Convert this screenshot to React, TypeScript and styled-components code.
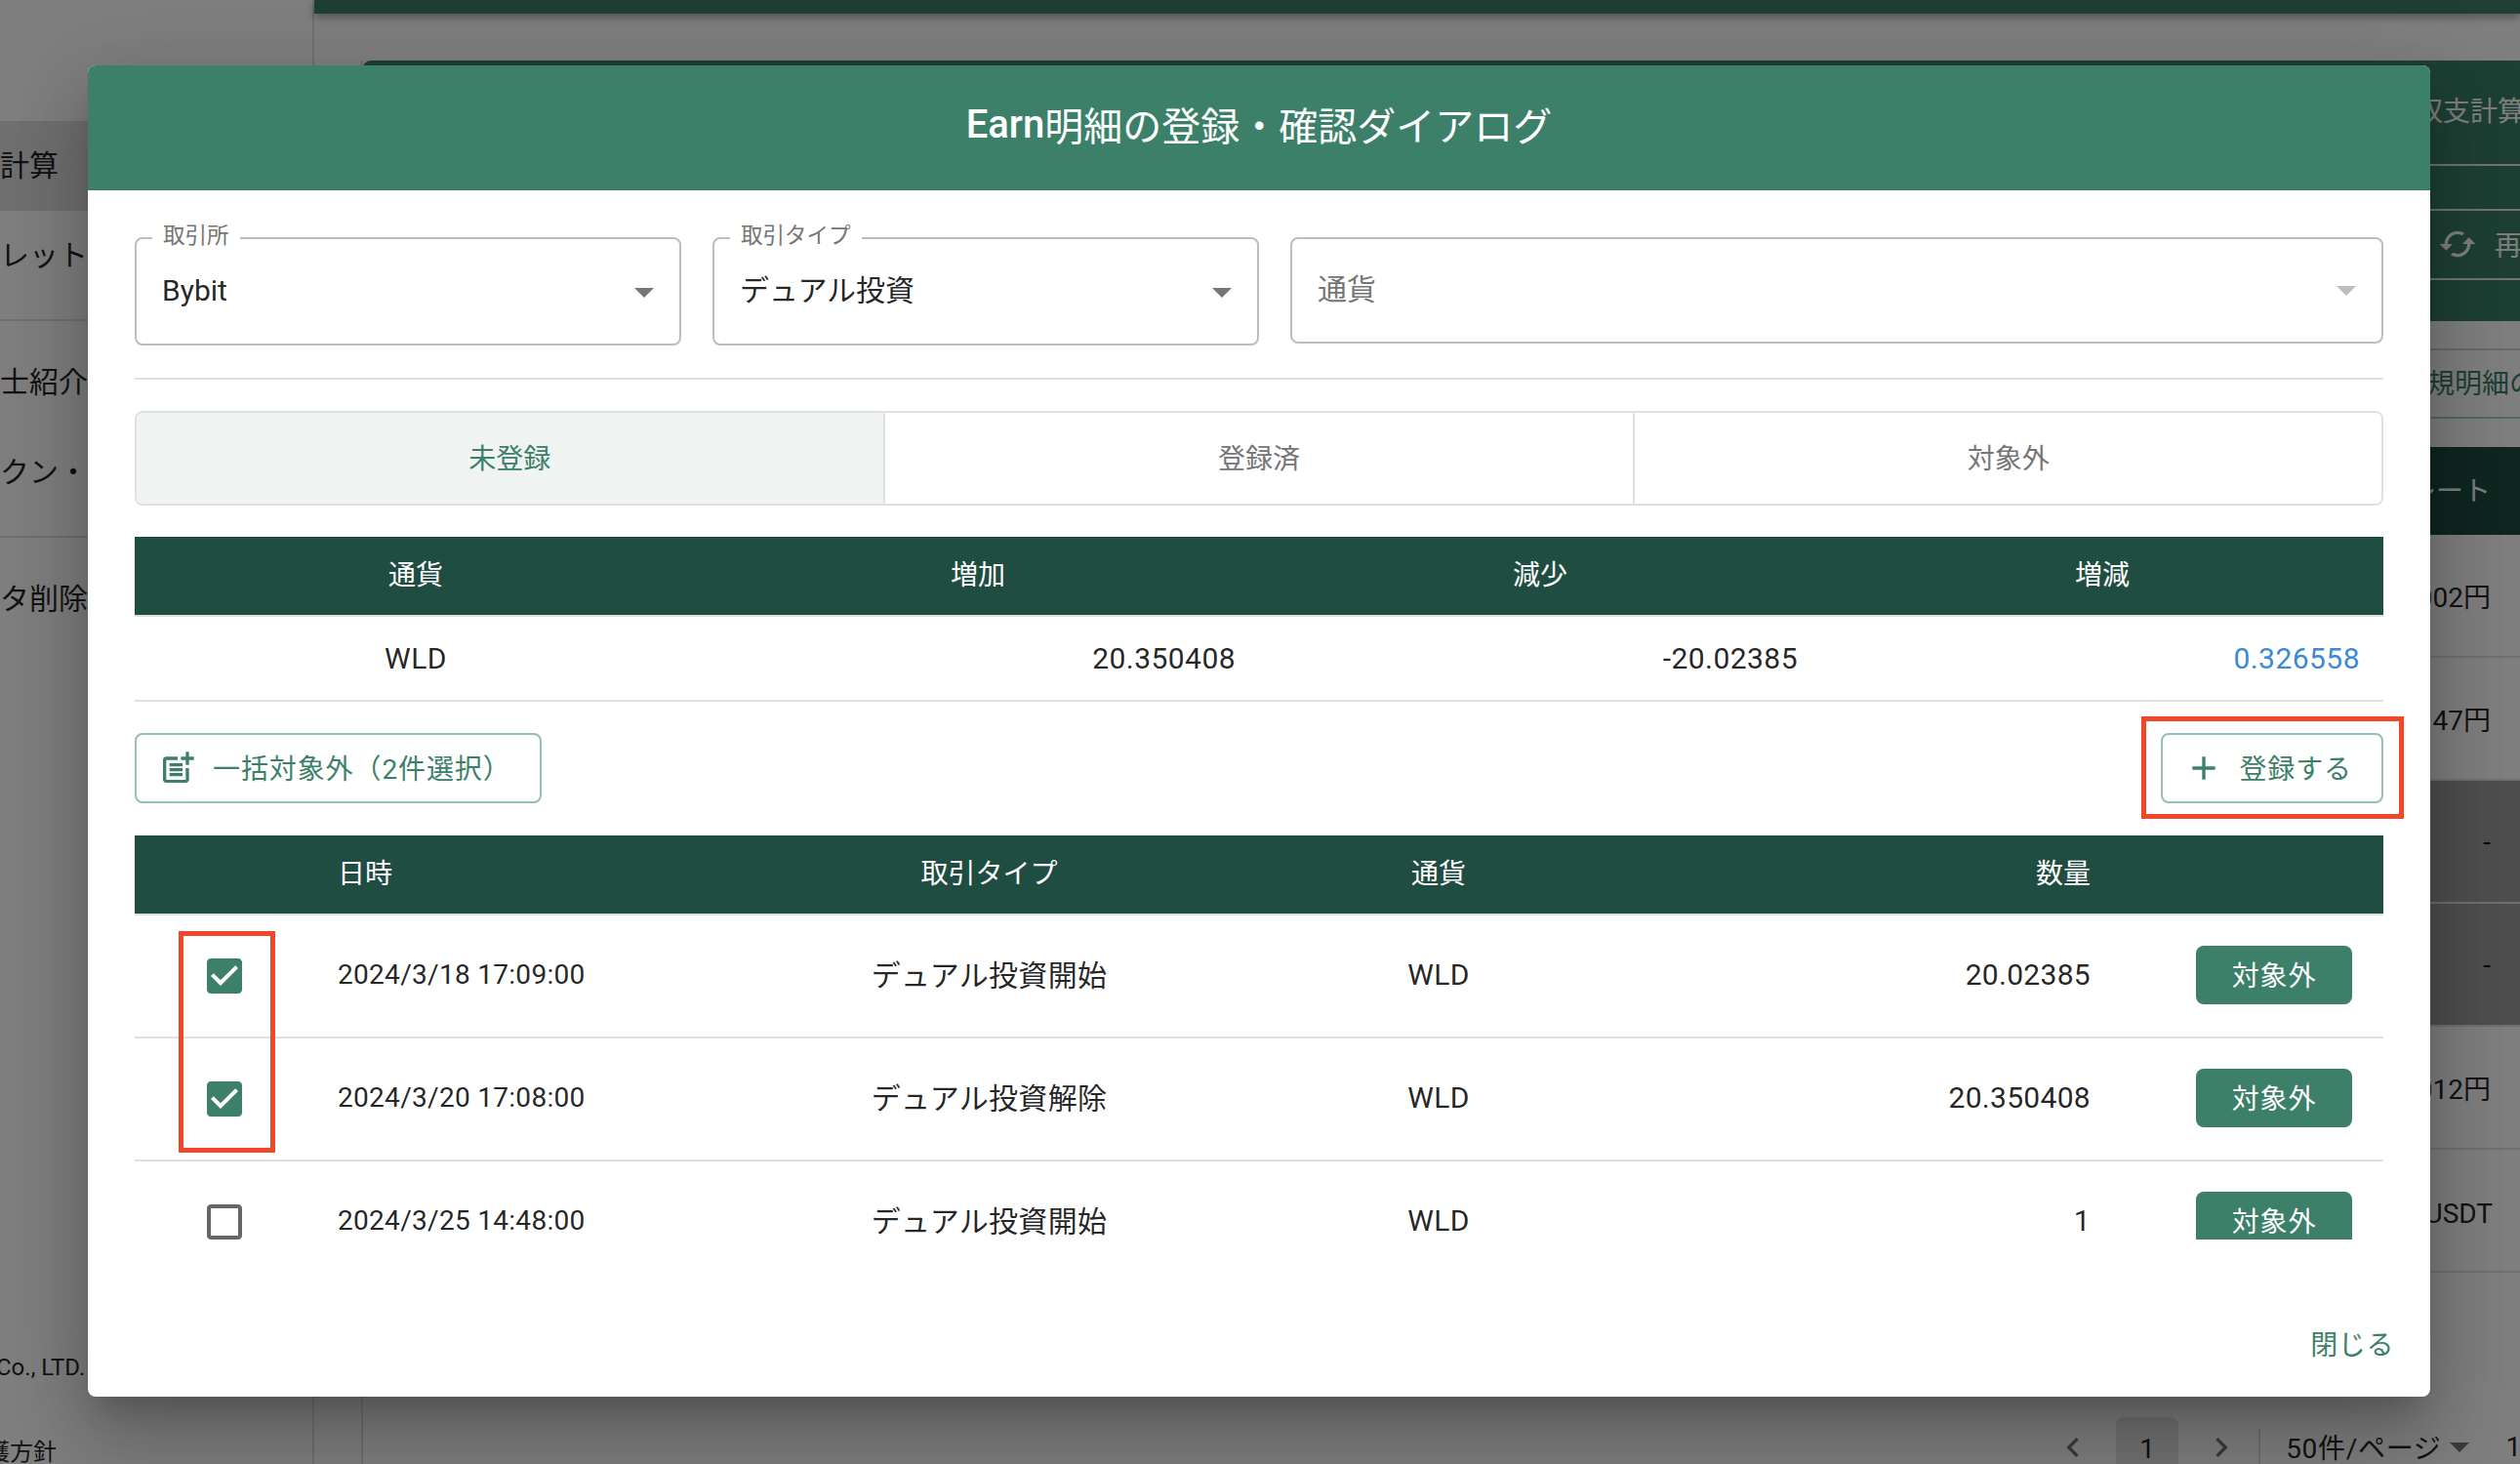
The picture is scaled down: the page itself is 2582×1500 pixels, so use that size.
import React from 'react';
import styled, { createGlobalStyle } from 'styled-components';

const GlobalStyle = createGlobalStyle`
    html, body {
        margin: 0;
        padding: 0;
        background: #fff;
    }
    * {
        box-sizing: border-box;
    }
    body {
        font-family: Roboto, "Noto Sans CJK JP", sans-serif;
        color: rgba(0, 0, 0, 0.87);
        -webkit-font-smoothing: antialiased;
    }
`;

const PRIMARY = '#3d8069';
const TABLE_HEAD = '#1f4d42';
const LINE = '#e0e0e0';

const Page = styled.div`
    width: 2582px;
    height: 1500px;
    display: flex;
    overflow: hidden;
    position: relative;
    background: #fff;
`;

const Sidebar = styled.aside`
    width: 322px;
    flex: none;
    display: flex;
    flex-direction: column;
    padding-top: 124px;
    border-right: 2px solid ${LINE};
`;

const MenuItem = styled.div<{ $selected?: boolean }>`
    height: 92px;
    display: flex;
    align-items: center;
    padding-bottom: 6px;
    font-size: 30px;
    background: ${props => (props.$selected ? 'rgba(0, 0, 0, 0.12)' : 'transparent')};
`;

const MenuDivider = styled.div`
    height: 2px;
    margin: 19px 0 17px;
    background: ${LINE};
`;

const SidebarFooter = styled.div`
    margin-top: auto;
    display: flex;
    flex-direction: column;
    gap: 57px;
    margin-bottom: -3px;
    font-size: 24px;
    line-height: 30px;
`;

const FooterLine = styled.div<{ $shift: number }>`
    margin-left: ${props => props.$shift}px;
    white-space: nowrap;
`;

const Main = styled.main`
    flex: 1;
    min-width: 0;
    display: flex;
    flex-direction: column;
`;

const TopBand = styled.div`
    height: 14px;
    flex: none;
    background: ${PRIMARY};
    box-shadow: 0 4px 10px rgba(0, 0, 0, 0.35);
`;

const Content = styled.div`
    flex: 1;
    display: flex;
    flex-direction: column;
    margin: 48px 0 0 48px;
    border-left: 2px solid ${LINE};
`;

const Panel = styled.section`
    background: ${PRIMARY};
    border-top-left-radius: 8px;
    color: #fff;
`;

const PanelRow = styled.div<{ $height: number; $line?: boolean; $lift?: number }>`
    height: ${props => props.$height}px;
    display: flex;
    align-items: center;
    justify-content: flex-end;
    gap: 18px;
    padding-bottom: ${props => props.$lift || 0}px;
    font-size: 28px;
    white-space: nowrap;
    border-top: ${props => (props.$line ? '2px solid #e8e8e8' : 'none')};
`;

const RowText = styled.span<{ $right: number; $down?: number }>`
    margin-right: ${props => props.$right}px;
    margin-top: ${props => props.$down || 0}px;
    white-space: nowrap;
`;

const NoticeRow = styled.div`
    height: 72px;
    margin: 28px 0 29px;
    display: flex;
    align-items: center;
    justify-content: flex-end;
    padding-bottom: 4px;
    font-size: 28px;
    color: ${PRIMARY};
    border-top: 2px solid #c6dcd5;
    border-bottom: 2px solid #a9d2c5;
`;

const BackgroundHead = styled.div`
    height: 90px;
    flex: none;
    display: flex;
    align-items: center;
    justify-content: flex-end;
    padding-bottom: 4px;
    font-size: 28px;
    color: #fff;
    background: ${TABLE_HEAD};
`;

const BackgroundRow = styled.div<{ $shaded?: boolean }>`
    height: 126px;
    flex: none;
    display: flex;
    align-items: center;
    justify-content: flex-end;
    font-size: 28px;
    background: ${props => (props.$shaded ? '#9e9e9e' : 'transparent')};
    border-bottom: 2px solid ${LINE};
`;

const Pagination = styled.nav`
    margin-top: auto;
    height: 48px;
    display: flex;
    align-items: flex-end;
    justify-content: flex-end;
    font-size: 28px;
    margin-right: -2px;
`;

const PageArrow = styled.svg`
    width: 40px;
    height: 40px;
    margin-bottom: -3px;
    fill: rgba(0, 0, 0, 0.54);
`;

const PageBox = styled.div`
    width: 64px;
    height: 48px;
    margin: 0 24px;
    display: flex;
    align-items: center;
    justify-content: center;
    border-radius: 8px 8px 0 0;
    background: rgba(0, 0, 0, 0.1);
    padding-top: 16px;
`;

const PageDivider = styled.div`
    width: 2px;
    height: 37px;
    margin: 0 26px 0 18px;
    background: ${LINE};
`;

const PageSize = styled.div`
    height: 48px;
    display: flex;
    align-items: center;
    padding-top: 12px;
    letter-spacing: 0.7px;
    white-space: nowrap;
`;

const PageCaret = styled.svg`
    width: 48px;
    height: 48px;
    margin: 0 24px 0 -6px;
    position: relative;
    top: 6px;
    fill: rgba(0, 0, 0, 0.54);
`;

const Overlay = styled.div`
    position: absolute;
    inset: 0;
    padding: 67px 0 0 90px;
    background: rgba(0, 0, 0, 0.5);
`;

const Dialog = styled.div`
    width: 2400px;
    height: 1364px;
    display: flex;
    flex-direction: column;
    overflow: hidden;
    background: #fff;
    border-radius: 8px;
    box-shadow: 0 22px 30px -14px rgba(0, 0, 0, 0.2), 0 48px 76px 6px rgba(0, 0, 0, 0.14),
        0 18px 92px 16px rgba(0, 0, 0, 0.12);
`;

const DialogTitle = styled.h2`
    margin: 0;
    height: 128px;
    flex: none;
    display: flex;
    align-items: center;
    justify-content: center;
    padding-bottom: 8px;
    font-size: 40px;
    font-weight: 400;
    color: #fff;
    background: ${PRIMARY};
`;

const TitleLatin = styled.span`
    font-weight: 500;
`;

const DialogBody = styled.div`
    padding: 48px 48px 0;
    display: flex;
    flex-direction: column;
`;

const Filters = styled.div`
    display: grid;
    grid-template-columns: 1fr 1fr 2fr;
    gap: 32px;
    align-items: start;
`;

const Field = styled.div<{ $empty?: boolean }>`
    position: relative;
    height: ${props => (props.$empty ? 109 : 111)}px;
    display: flex;
    align-items: center;
    justify-content: space-between;
    padding: 0 12px 2px 26px;
    border: 2px solid #bdbdbd;
    border-radius: 8px;
    font-size: 30px;
    color: ${props => (props.$empty ? '#757575' : 'rgba(0, 0, 0, 0.87)')};
`;

const FieldValue = styled.span<{ $cjk?: boolean }>`
    margin-bottom: ${props => (props.$cjk ? 6 : 0)}px;
`;

const FieldLabel = styled.label`
    position: absolute;
    top: -18px;
    left: 16px;
    padding: 0 11px;
    font-size: 22.5px;
    line-height: 28px;
    color: #757575;
    background: #fff;
`;

const Caret = styled.svg<{ $muted?: boolean }>`
    width: 48px;
    height: 48px;
    margin-top: ${props => (props.$muted ? 0 : 2)}px;
    fill: ${props => (props.$muted ? '#bdbdbd' : '#757575')};
`;

const Divider = styled.hr`
    margin: 33px 0 32px;
    width: 100%;
    height: 2px;
    border: none;
    background: ${LINE};
`;

const Tabs = styled.div`
    height: 97px;
    display: grid;
    grid-template-columns: repeat(3, 1fr);
    border: 2px solid ${LINE};
    border-radius: 8px;
    overflow: hidden;
`;

const Tab = styled.div<{ $active?: boolean }>`
    display: flex;
    align-items: center;
    justify-content: center;
    padding-bottom: 4px;
    font-size: 28px;
    color: ${props => (props.$active ? PRIMARY : '#757575')};
    background: ${props => (props.$active ? '#eff3f2' : '#fff')};
    &:first-child {
        border-right: 2px solid ${LINE};
    }
    &:last-child {
        border-left: 2px solid ${LINE};
    }
`;

const Table = styled.table`
    width: 100%;
    border-collapse: collapse;
    table-layout: fixed;
`;

const SummaryTable = styled(Table)`
    margin-top: 32px;
`;

const Th = styled.th<{ $align?: string }>`
    height: 81px;
    padding: 0 24px 6px;
    font-size: 28px;
    font-weight: 400;
    color: #fff;
    text-align: ${props => props.$align || 'center'};
    background: ${TABLE_HEAD};
    border-bottom: 2px solid ${LINE};
`;

const SummaryCell = styled.td<{ $align?: string; $blue?: boolean }>`
    height: 87px;
    padding: 0 24px;
    font-size: 30px;
    letter-spacing: 0.45px;
    text-align: ${props => props.$align || 'right'};
    color: ${props => (props.$blue ? '#3b8ad2' : 'rgba(0, 0, 0, 0.87)')};
    border-bottom: 2px solid ${LINE};
`;

const ActionRow = styled.div`
    margin-top: 32px;
    display: flex;
    align-items: center;
    justify-content: space-between;
`;

const OutlineButton = styled.button`
    height: 72px;
    display: flex;
    align-items: center;
    gap: 16px;
    padding: 0 30px 0 22px;
    font-family: inherit;
    font-size: 28px;
    letter-spacing: 0.9px;
    color: ${PRIMARY};
    background: #fff;
    border: 2px solid #95bfae;
    border-radius: 8px;
`;

const BulkButton = styled(OutlineButton)`
    width: 417px;
`;

const ButtonLabel = styled.span`
    margin-bottom: 3px;
    white-space: nowrap;
`;

const ButtonIcon = styled.svg`
    width: 40px;
    height: 40px;
    flex: none;
    fill: ${PRIMARY};
`;

const AddWrap = styled.div`
    position: relative;
`;

const RedBox = styled.div`
    position: absolute;
    border: 5px solid #f0462a;
    pointer-events: none;
`;

const AddMark = styled(RedBox)`
    left: -20px;
    right: -21px;
    top: -17px;
    bottom: -16px;
`;

const CheckMark = styled(RedBox)`
    left: 45px;
    top: 98px;
    width: 99px;
    height: 227px;
`;

const ListWrap = styled.div`
    position: relative;
    margin-top: 33px;
`;

const ListScroll = styled.div`
    height: 414px;
    overflow: hidden;
`;

const Td = styled.td<{ $align?: string; $small?: boolean }>`
    height: 126px;
    padding: 0 24px 4px;
    font-size: ${props => (props.$small ? 28 : 30)}px;
    letter-spacing: 0.3px;
    text-align: ${props => props.$align || 'left'};
    border-bottom: 2px solid ${LINE};
`;

const TypeCell = styled(Td)`
    padding-bottom: 6px;
    text-align: center;
`;

const CheckCell = styled(Td)`
    padding: 0;
    text-align: center;
`;

const ButtonCell = styled(Td)`
    padding: 0 32px 2px 0;
    text-align: right;
`;

const CheckIcon = styled.svg<{ $checked?: boolean }>`
    display: block;
    width: 48px;
    height: 48px;
    margin: 0 auto;
    fill: ${props => (props.$checked ? PRIMARY : 'rgba(0, 0, 0, 0.6)')};
`;

const ExcludeButton = styled.button`
    width: 160px;
    height: 60px;
    padding: 0 0 2px;
    font-family: inherit;
    font-size: 28px;
    letter-spacing: 0.8px;
    color: #fff;
    background: ${PRIMARY};
    border: none;
    border-radius: 8px;
`;

const DialogFooter = styled.div`
    margin-top: auto;
    display: flex;
    justify-content: flex-end;
    padding: 0 37px 35px;
    font-size: 28px;
    letter-spacing: 0.6px;
    line-height: 34px;
    color: ${PRIMARY};
`;

const CARET_PATH = 'M7 10l5 5 5-5z';
const CHECKED_PATH =
    'M19 3H5c-1.11 0-2 .9-2 2v14c0 1.1.89 2 2 2h14c1.1 0 2-.9 2-2V5c0-1.11-.9-2-2-2zm-9 14l-5-5 1.41-1.41L10 14.17l7.59-7.59L19 8l-9 9z';
const UNCHECKED_PATH =
    'M19 5v14H5V5h14m0-2H5c-1.1 0-2 .9-2 2v14c0 1.1.9 2 2 2h14c1.1 0 2-.9 2-2V5c0-1.1-.9-2-2-2z';

const rows = [
    { date: '2024/3/18 17:09:00', type: 'デュアル投資開始', amount: '20.02385', checked: true },
    { date: '2024/3/20 17:08:00', type: 'デュアル投資解除', amount: '20.350408', checked: true },
    { date: '2024/3/25 14:48:00', type: 'デュアル投資開始', amount: '1', checked: false },
];

const Background = () => (
    <>
        <Sidebar>
            <MenuItem $selected>計算</MenuItem>
            <MenuItem>レット</MenuItem>
            <MenuDivider />
            <MenuItem>士紹介</MenuItem>
            <MenuItem>クン・</MenuItem>
            <MenuDivider />
            <MenuItem>タ削除</MenuItem>
            <SidebarFooter>
                <FooterLine $shift={-4}>Co., LTD.</FooterLine>
                <FooterLine $shift={-14}>護方針</FooterLine>
            </SidebarFooter>
        </Sidebar>
        <Main>
            <TopBand />
            <Content>
                <Panel>
                    <PanelRow $height={106} $lift={6}>
                        <RowText $right={-5}>収支計算</RowText>
                    </PanelRow>
                    <PanelRow $height={46} $line />
                    <PanelRow $height={71} $line $lift={2}>
                        <svg width="40" height="40" viewBox="0 0 24 24" fill="#fff">
                            <path d="M19 8l-4 4h3c0 3.31-2.69 6-6 6-1.01 0-1.97-.25-2.8-.7l-1.46 1.46C8.97 19.54 10.43 20 12 20c4.42 0 8-3.58 8-8h3l-4-4zM6 12c0-3.31 2.69-6 6-6 1.01 0 1.97.25 2.8.7l1.46-1.46C15.03 4.46 13.57 4 12 4c-4.42 0-8 3.58-8 8H1l4 4 4-4H6z" />
                        </svg>
                        <RowText $right={-2}>再</RowText>
                    </PanelRow>
                    <PanelRow $height={44} $line />
                </Panel>
                <NoticeRow>
                    <RowText $right={-17}>新規明細の</RowText>
                </NoticeRow>
                <BackgroundHead>
                    <RowText $right={30}>レート</RowText>
                </BackgroundHead>
                <BackgroundRow>
                    <RowText $right={30}>8,002円</RowText>
                </BackgroundRow>
                <BackgroundRow>
                    <RowText $right={30}>47円</RowText>
                </BackgroundRow>
                <BackgroundRow $shaded>
                    <RowText $right={30}>-</RowText>
                </BackgroundRow>
                <BackgroundRow $shaded>
                    <RowText $right={30}>-</RowText>
                </BackgroundRow>
                <BackgroundRow>
                    <RowText $right={30}>5,012円</RowText>
                </BackgroundRow>
                <BackgroundRow>
                    <RowText $right={28} $down={6}>
                        USDT
                    </RowText>
                </BackgroundRow>
                <Pagination>
                    <PageArrow viewBox="0 0 24 24">
                        <path d="M15.41 7.41 14 6l-6 6 6 6 1.41-1.41L10.83 12z" />
                    </PageArrow>
                    <PageBox>1</PageBox>
                    <PageArrow viewBox="0 0 24 24">
                        <path d="M10 6 8.59 7.41 13.17 12l-4.58 4.59L10 18l6-6z" />
                    </PageArrow>
                    <PageDivider />
                    <PageSize>50件/ページ</PageSize>
                    <PageCaret viewBox="0 0 24 24">
                        <path d={CARET_PATH} />
                    </PageCaret>
                    <PageSize>1</PageSize>
                </Pagination>
            </Content>
        </Main>
    </>
);

const App = () => (
    <Page>
        <GlobalStyle />
        <Background />
        <Overlay>
            <Dialog>
                <DialogTitle>
                    <TitleLatin>Earn</TitleLatin>明細の登録・確認ダイアログ
                </DialogTitle>
                <DialogBody>
                    <Filters>
                        <Field>
                            <FieldLabel>取引所</FieldLabel>
                            <FieldValue>Bybit</FieldValue>
                            <Caret viewBox="0 0 24 24">
                                <path d={CARET_PATH} />
                            </Caret>
                        </Field>
                        <Field>
                            <FieldLabel>取引タイプ</FieldLabel>
                            <FieldValue $cjk>デュアル投資</FieldValue>
                            <Caret viewBox="0 0 24 24">
                                <path d={CARET_PATH} />
                            </Caret>
                        </Field>
                        <Field $empty>
                            <FieldValue $cjk>通貨</FieldValue>
                            <Caret $muted viewBox="0 0 24 24">
                                <path d={CARET_PATH} />
                            </Caret>
                        </Field>
                    </Filters>
                    <Divider />
                    <Tabs>
                        <Tab $active>未登録</Tab>
                        <Tab>登録済</Tab>
                        <Tab>対象外</Tab>
                    </Tabs>
                    <SummaryTable>
                        <thead>
                            <tr>
                                <Th>通貨</Th>
                                <Th>増加</Th>
                                <Th>減少</Th>
                                <Th>増減</Th>
                            </tr>
                        </thead>
                        <tbody>
                            <tr>
                                <SummaryCell $align="center">WLD</SummaryCell>
                                <SummaryCell>20.350408</SummaryCell>
                                <SummaryCell>-20.02385</SummaryCell>
                                <SummaryCell $blue>0.326558</SummaryCell>
                            </tr>
                        </tbody>
                    </SummaryTable>
                    <ActionRow>
                        <BulkButton>
                            <ButtonIcon viewBox="0 0 24 24">
                                <path d="M17 19.22H5V7h7V5H5c-1.1 0-2 .9-2 2v12c0 1.1.9 2 2 2h12c1.1 0 2-.9 2-2v-7h-2v7.22z" />
                                <path d="M19 2h-2v3h-3c.01.01 0 2 0 2h3v2.99c.01.01 2 0 2 0V7h3V5h-3V2z" />
                                <path d="M7 9h8v2H7zM7 12v2h8v-2h-3zM7 15h8v2H7z" />
                            </ButtonIcon>
                            <ButtonLabel>一括対象外（2件選択）</ButtonLabel>
                        </BulkButton>
                        <AddWrap>
                            <OutlineButton>
                                <ButtonIcon viewBox="0 0 24 24">
                                    <path d="M19 13h-6v6h-2v-6H5v-2h6V5h2v6h6v2z" />
                                </ButtonIcon>
                                <ButtonLabel>登録する</ButtonLabel>
                            </OutlineButton>
                            <AddMark />
                        </AddWrap>
                    </ActionRow>
                    <ListWrap>
                        <ListScroll>
                            <Table>
                                <colgroup>
                                    <col width={184} />
                                    <col width={400} />
                                    <col width={583} />
                                    <col width={338} />
                                    <col width={523} />
                                    <col width={276} />
                                </colgroup>
                                <thead>
                                    <tr>
                                        <Th />
                                        <Th $align="left">日時</Th>
                                        <Th>取引タイプ</Th>
                                        <Th>通貨</Th>
                                        <Th $align="right">数量</Th>
                                        <Th />
                                    </tr>
                                </thead>
                                <tbody>
                                    {rows.map(row => (
                                        <tr key={row.date}>
                                            <CheckCell>
                                                <CheckIcon $checked={row.checked} viewBox="0 0 24 24">
                                                    <path d={row.checked ? CHECKED_PATH : UNCHECKED_PATH} />
                                                </CheckIcon>
                                            </CheckCell>
                                            <Td $small>{row.date}</Td>
                                            <TypeCell>{row.type}</TypeCell>
                                            <Td $align="center">WLD</Td>
                                            <Td $align="right">{row.amount}</Td>
                                            <ButtonCell>
                                                <ExcludeButton>対象外</ExcludeButton>
                                            </ButtonCell>
                                        </tr>
                                    ))}
                                </tbody>
                            </Table>
                        </ListScroll>
                        <CheckMark />
                    </ListWrap>
                </DialogBody>
                <DialogFooter>閉じる</DialogFooter>
            </Dialog>
        </Overlay>
    </Page>
);

export default App;
